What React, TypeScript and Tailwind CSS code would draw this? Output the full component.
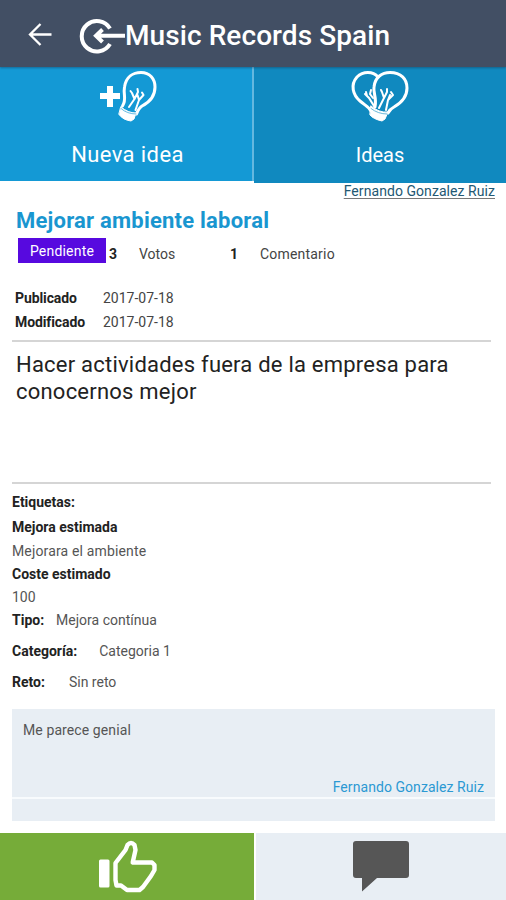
import React from "react";

function Bulb() {
  return (
    <g fill="none" stroke="#fff" strokeWidth="3" strokeLinecap="round" strokeLinejoin="round">
      <path d="M121.500 106C126 99 122 95 123.500 87C125 77 132 72.500 140 72.500C149 72.500 154 79 154 87C154 97 147 103 141 106C138 108 137 110 135.500 114" />
      <path d="M128 107L133.500 99L131 93M134.500 110L138 100L142.500 95M133.500 99L137 92M138 100L136.500 95M131 93L129.500 91M142.500 95L141 92.500M137 92L136.500 89" strokeWidth="2" />
      <path d="M120 107Q127 113 135 113L133 119L130 121Q122 120 118 114.500Z" fill="#fff" strokeWidth="1" />
      <path d="M120 108.500Q126 114 135 114" stroke="#42abd9" strokeWidth=".8" />
    </g>
  );
}

function Rule() {
  return <div className="ml-3 mr-[15px] h-[2px] shrink-0 bg-[#d5d5d5]" />;
}

function Detail({ label, value, row, gap }: { label: string; value?: string; row: string; gap?: string }) {
  return (
    <div className={`flex items-center ${row}`}>
      <span className="font-bold text-[#222]">{label}</span>
      {value && <span className={`text-[#555] ${gap ?? ""}`}>{value}</span>}
    </div>
  );
}

export default function App() {
  return (
    <div className="flex h-[900px] w-[506px] flex-col overflow-hidden bg-white font-['Roboto',sans-serif] text-[14px] whitespace-nowrap text-[#444]">
      <header className="relative flex h-[67px] shrink-0 items-center bg-[#424f64] pt-[4px] text-white shadow-[0_1px_2px_rgba(20,50,80,0.45)]">
        <svg className="shrink-0" width="125" height="60" viewBox="0 5.5 125 60" fill="none" stroke="#fff">
          <path d="M51.500 34H30.500M40.500 23.500L30 34L40.500 44.500" strokeWidth="2.300" />
          <path d="M110 28A15.200 15.200 0 1 0 110 43.500" strokeWidth="4" />
          <path d="M125 35.200H96M102.500 29L96 35.200L102.500 41.500" strokeWidth="4" />
        </svg>
        <h1 className="text-[28px] font-medium leading-[32px] tracking-[0.08px]">Music Records Spain</h1>
      </header>

      <nav className="flex h-[116px] shrink-0 text-[22px] text-white">
        <button className="mb-[2px] flex w-[252px] flex-col items-center bg-[#1499d5] pl-[3px]">
          <svg width="62" height="58" viewBox="96 67 62 58">
            <path d="M99 96H119M109 86V107" stroke="#fff" strokeWidth="6" />
            <Bulb />
          </svg>
          <span className="mt-[17px] leading-[26px] tracking-[0.4px]">Nueva idea</span>
        </button>
        <div className="mb-[2px] w-[2px] bg-[#64b8df]" />
        <button className="flex w-[252px] flex-col items-center bg-[#1089bf]">
          <svg width="62" height="58" viewBox="349 67 62 58">
            <g fill="none" stroke="#fff" strokeWidth="3" strokeLinecap="round">
              <path d="M378 77C373 71 363 71 357 77C350 85 353 95 360 101C366 106 369 107 371 111" />
              <path d="M375 107C377 98 373 93 374 87C375 77 382 72.500 390 72.500C401 72.500 407 79 407 88C407 97 401 103 394 107Q390 109 388 113" />
              <path d="M374 106L369 98L365 94M373 98L370 94L371 90M367 96L366 92M379 108L384 98L382 92M386 110L388 100L393 95M384 98L387 92M388 100L390 95M382 92L381 90M387 92L387 89M393 95L391 92" strokeWidth="2" />
              <path d="M371 106Q379 113 388 112L385 119L382 121Q373 119 370 115Z" fill="#fff" strokeWidth="1" />
              <path d="M371 108.500Q378 114 387 114" stroke="#43a4cd" strokeWidth=".8" />
            </g>
          </svg>
          <span className="mt-[17px] text-[20px] leading-[26px]">Ideas</span>
        </button>
      </nav>

      <div className="flex h-[17px] shrink-0 justify-end pr-[11px] leading-[16px]">
        <a className="tracking-[0.06px] text-[#235873] underline decoration-[#777] underline-offset-2">Fernando Gonzalez Ruiz</a>
      </div>
      <section className="flex h-[140px] shrink-0 flex-col">
        <h2 className="ml-4 mt-[7px] text-[22px] font-bold leading-[28px] tracking-[0.22px] text-[#1996d0]">Mejorar ambiente laboral</h2>
        <div className="mt-[3px] flex h-[26px] pl-[18px]">
          <span className="flex h-[25px] w-[88px] items-center justify-center bg-[#5709df] pt-px text-[14px] tracking-[0.2px] text-white">Pendiente</span>
          <b className="ml-[3px] w-[30px] pt-[7px] leading-[18px] text-[#222]">3</b>
          <span className="w-[91px] pt-[7px] leading-[18px]">Votos</span>
          <b className="w-[30px] pt-[7px] leading-[18px] text-[#222]">1</b>
          <span className="pt-[7px] leading-[18px] tracking-[0.2px]">Comentario</span>
        </div>
        <dl className="mt-[22px] grid grid-cols-[88px_auto] justify-start pl-[15px] leading-[24px]">
          <dt className="font-bold tracking-[-0.1px] text-[#222]">Publicado</dt><dd>2017-07-18</dd>
          <dt className="font-bold tracking-[-0.1px] text-[#222]">Modificado</dt><dd>2017-07-18</dd>
        </dl>
      </section>
      <Rule />
      <p className="h-[140px] shrink-0 whitespace-normal pl-4 pr-[30px] pt-[9px] text-[22px] leading-[27px] tracking-[0.22px] text-[#222]">
        Hacer actividades fuera de la empresa para conocernos mejor
      </p>
      <Rule />
      <section className="flex h-[225px] shrink-0 flex-col pl-3 pt-[5px] leading-[24px]">
        <Detail label="Etiquetas:" row="h-[25px]" />
        <Detail label="Mejora estimada" row="h-[25px]" />
        <div className="h-[23px] tracking-[0.15px] text-[#555]">Mejorara el ambiente</div>
        <Detail label="Coste estimado" row="h-[23px]" />
        <div className="h-[23px] text-[#555]">100</div>
        <Detail label="Tipo:" value="Mejora contínua" row="h-[23px]" gap="ml-[12px]" />
        <Detail label="Categoría:" value="Categoria 1" row="h-[39px]" gap="ml-[22px]" />
        <Detail label="Reto:" value="Sin reto" row="h-[23px]" gap="ml-[24px]" />
      </section>
      <article className="ml-3 mr-[11px] flex h-[112px] shrink-0 flex-col bg-[#e8eef4]">
        <p className="ml-[11px] mt-[12px] leading-[18px] tracking-[0.1px] text-[#555]">Me parece genial</p>
        <span className="mr-[11px] mt-[40px] self-end leading-[17px] tracking-[0.06px] text-[#2b99d3]">Fernando Gonzalez Ruiz</span>
        <div className="mt-[1px] h-[2px] bg-[#f8fbfd]" />
      </article>
      <footer className="mt-[12px] flex h-[67px] shrink-0 gap-[2px]">
        <button className="flex w-[254px] justify-center bg-[#76ac39]">
          <svg width="64" height="67" viewBox="95 833 64 67">
            <rect x="99" y="859.5" width="10.500" height="28" rx="1.500" fill="#fff" />
            <path d="M115.500 863L125.500 850L127.500 845Q131 841 134.500 845L135.500 850L132.700 862.500H152L154.500 865V870L151 876L143 887L139.500 890H127L121 885.500H116.500L115.500 880Z" fill="none" stroke="#fff" strokeWidth="4.400" strokeLinejoin="round" />
          </svg>
        </button>
        <button className="flex w-[250px] justify-center bg-[#e8eef4]">
          <svg width="62" height="67" viewBox="350 833 62 67">
            <path d="M356 841H406Q409 841 409 844V875Q409 878 406 878H377L362 891.500V878H356Q353 878 353 875V844Q353 841 356 841Z" fill="#565656" />
          </svg>
        </button>
      </footer>
    </div>
  );
}
